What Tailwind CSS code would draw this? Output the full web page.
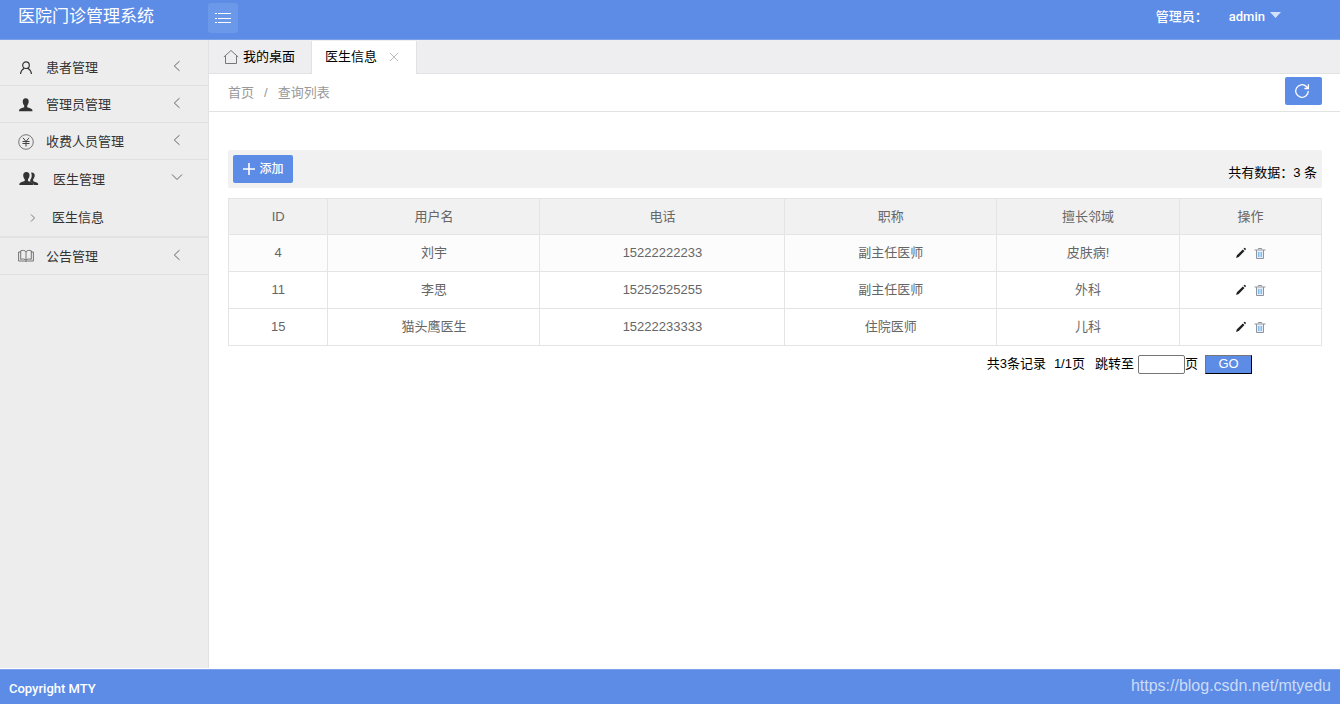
<!DOCTYPE html>
<html lang="zh-CN">
<head>
<meta charset="utf-8">
<title>医院门诊管理系统</title>
<script src="https://cdn.jsdelivr.net/npm/@tailwindcss/browser@4"></script>
</head>
<body class="flex min-h-screen flex-col bg-white font-['Liberation_Sans','Noto_Sans_CJK_SC',sans-serif] text-[13px] leading-5 text-black">
<svg class="hidden">
  <symbol id="left" viewBox="0 0 12 12"><path d="M8.500 1.200 3.300 6l5.200 4.800" fill="none" stroke="#666"/></symbol>
  <symbol id="pencil" viewBox="0 0 12 12"><path d="M1 11l.9-2.700 5.900-5.900 1.700 1.700L3.700 10zM8.500 1.700l.8-.8q.6-.3 1.200.3t.3 1.200l-.7.900z" fill="#222"/></symbol>
  <symbol id="trash" viewBox="0 0 12 12"><path d="M3 4h6v7H3z" fill="#e3f0fb"/><path d="M.5 3h11M4.300 2.500v-1h3.400v1M2.500 3v8.500h7V3" fill="none" stroke="#8f949c"/><path d="M4.500 5v5M6 5v5M7.500 5v5" stroke="#6aaee6" stroke-width=".8" fill="none"/></symbol>
</svg>

<header class="flex h-10 shrink-0 items-start border-b border-[#7ba1ea] bg-[#5c8ce6] text-white">
  <h1 class="w-[208px] pl-[18px] text-[17px] leading-[34px]">医院门诊管理系统</h1>
  <button type="button" aria-label="菜单" class="mt-[3px] flex size-[30px] items-center justify-center rounded-[3px] bg-white/10">
    <svg class="size-4" viewBox="0 0 16 16" fill="none" stroke="#fff"><path d="M0 3.500h2M3 3.500h13M0 8.500h2M3 8.500h13M0 12.500h2M3 12.500h13"/></svg>
  </button>
  <div class="mr-[59px] ml-auto flex h-[34px] items-center font-medium">
    <span class="mr-[21px]">管理员：</span>
    <a href="#" class="flex items-center gap-[5px] font-[Roboto]">admin
      <svg class="mb-1 h-[6px] w-[11px]" viewBox="0 0 11 6"><path d="M0 0h11L5.500 6z" fill="#d5e1f9"/></svg></a>
  </div>
</header>

<div class="flex flex-1">
  <nav class="mb-px w-[209px] shrink-0 border-r border-[#e2e2e4] bg-[#ededed] pt-[9px] text-[#333]">
    <a href="#" class="flex h-[37px] items-center border-b border-[#e0e0e0] pt-[2px] pr-[25px] pl-[18px]">
      <svg class="mr-3 mb-px size-4" viewBox="0 0 16 16" fill="none" stroke="#333" stroke-width="1.200"><circle cx="8" cy="5.200" r="3.300"/><path d="M6.300 8.300C4 9.500 2.800 11.500 2.500 14M9.700 8.300c2.300 1.200 3.500 3.200 3.800 5.700"/></svg>
      患者管理<svg class="mb-1 ml-auto size-3"><use href="#left"/></svg></a>
    <a href="#" class="flex h-[37px] items-center border-b border-[#e0e0e0] pt-[2px] pr-[25px] pl-[18px]">
      <svg class="mr-3 mb-px size-4" viewBox="0 0 16 16" fill="#333"><path d="M7.700 1.200c2.200 0 3.100 1.500 3 3.400-.1 1.900-.8 3.200-1.500 4v1.600c1.700.9 4.600 1 5.100 2.600l.2 1.400H1l.2-1.400c.5-1.600 3.300-1.700 5-2.600V8.600c-.8-.8-1.400-2.100-1.500-4 0-1.900.9-3.400 3-3.400z"/></svg>
      管理员管理<svg class="mb-1 ml-auto size-3"><use href="#left"/></svg></a>
    <a href="#" class="flex h-[37px] items-center border-b border-[#e0e0e0] pt-[2px] pr-[25px] pl-[18px]">
      <svg class="mr-3 mb-px size-4" viewBox="0 0 16 16" fill="none" stroke="#444"><circle cx="8" cy="8" r="7.300" stroke-width=".7"/><path d="M5 3.800 8 7.500l3-3.700M8 7.500v5M4.500 7.500h7M4.500 9.500h7"/></svg>
      收费人员管理<svg class="mb-1 ml-auto size-3"><use href="#left"/></svg></a>
    <div class="border-b-2 border-[#e2e2e2]">
      <a href="#" class="flex h-[38px] items-center pt-px pr-[25px] pl-[19px]">
        <svg class="mr-[14px] mb-px h-4 w-5" viewBox="0 0 20 16" fill="#333"><path d="M12.500 1.500c2.200-.2 3.300 1.200 3.200 3-.1 1.700-.8 2.900-1.500 3.700v2c1.600.8 4.300 1 4.800 2.400l.2 1.400h-4.300c-.3-1.900-2.200-2.500-3.700-3.200V8.900c.9-1.200 1.500-2.600 1.500-4.200 0-1.300-.2-2.400-.7-3z"/><path d="M7.400.9c2.200 0 3.200 1.500 3.100 3.400-.1 1.900-.8 3.200-1.500 4V10c1.700.9 4.700 1 5.200 2.600l.2 1.400H.3l.2-1.400c.5-1.600 3.500-1.700 5.200-2.600V8.300c-.8-.8-1.400-2.100-1.500-4 0-1.900 1-3.400 3.200-3.400z"/></svg>
        医生管理<svg class="mb-[5px] ml-auto size-3" viewBox="0 0 12 12"><path d="M1 3.500l5 5 5-5" fill="none" stroke="#666"/></svg></a>
      <a href="#" class="flex h-[38px] items-center pt-px pl-7">
        <svg class="mr-[14px] size-[10px]" viewBox="0 0 10 10"><path d="M3 1.500 6.500 5 3 8.500" fill="none" stroke="#777"/></svg>医生信息</a>
    </div>
    <a href="#" class="flex h-[37px] items-center border-b border-[#e0e0e0] pt-px pr-[25px] pl-[18px]">
      <svg class="mr-3 mb-px size-4" viewBox="0 0 16 16" fill="none" stroke="#555" stroke-width=".8"><path d="M8 3.800v8.700M8 3.800C7 2.300 4.500 2 2.700 2.800v8.500c2-.6 4.300-.3 5.300 1 1-1.300 3.300-1.600 5.300-1V2.800C11.500 2 9 2.300 8 3.800M2.700 4H.6v9h6q1.400 1 2.800 0h6V4h-2.100"/></svg>
      公告管理<svg class="mb-1 ml-auto size-3"><use href="#left"/></svg></a>
  </nav>

  <main class="min-w-0 flex-1">
    <div class="flex h-[34px] border-b border-[#e2e2e4] bg-[#eeeef0] pt-px">
      <a href="#" class="flex items-center border-r border-[#e2e2e4] pr-4 pl-[14px]">
        <svg class="mr-1 mb-px size-4" viewBox="0 0 16 16" fill="none" stroke="#777"><path d="M.8 8 8 1.500 15.200 8M2.500 7v7.500h11V7"/></svg>我的桌面</a>
      <div class="-mb-px flex items-center border-r border-[#e2e2e4] bg-white pr-[17px] pb-[2px] pl-[13px]">医生信息
        <button type="button" aria-label="关闭" class="ml-3"><svg class="size-[10px]" viewBox="0 0 10 10"><path d="M1 1l8 8M9 1 1 9" stroke="#bbb"/></svg></button></div>
    </div>
    <div class="flex h-[38px] items-center justify-between border-b border-[#e2e2e2] pr-[18px] pl-[19px] text-[#999]">
      <div class="flex gap-[10px]"><a href="#">首页</a><span>/</span><a href="#">查询列表</a></div>
      <button type="button" aria-label="刷新" class="mb-1 flex h-7 w-[37px] items-center rounded-[2px] bg-[#5c8ce6] pl-[9px]">
        <svg class="size-4" viewBox="0 0 16 16" fill="none" stroke="#fff" stroke-width="1.300"><path d="M14.300 8A6.300 6.300 0 1 1 12.300 3.400L14 5M14.400 1.300v4.200h-4"/></svg></button>
    </div>
    <div class="pt-[38px] pr-[18px] pl-[19px]">
      <div class="flex h-[38px] items-start justify-between rounded-[2px] bg-[#f1f1f1] p-[5px]">
        <button type="button" class="flex h-7 w-[60px] items-center justify-center gap-1 rounded-[2px] bg-[#5c8ce6] pl-px text-[12px] font-medium text-white">
          <svg class="size-3" viewBox="0 0 12 12"><path d="M6 0v12M0 6h12" stroke="#fff" stroke-width="1.600"/></svg>添加</button>
        <span class="pt-2">共有数据：3 条</span>
      </div>
      <table class="mt-[10px] w-full table-fixed border-collapse text-center text-[#666] [&_td]:border [&_td]:border-[#e4e4e4] [&_th]:border [&_th]:border-[#e4e4e4] [&_th]:font-normal">
        <colgroup><col class="w-[9.100%]"><col class="w-[19.400%]"><col class="w-[22.400%]"><col class="w-[19.400%]"><col class="w-[16.700%]"><col></colgroup>
        <thead><tr class="h-[36px] bg-[#f1f1f1]"><th>ID</th><th>用户名</th><th>电话</th><th>职称</th><th>擅长邻域</th><th>操作</th></tr></thead>
        <tbody>
          <tr class="h-[37px] bg-[#fcfcfc]"><td>4</td><td>刘宇</td><td>15222222233</td><td>副主任医师</td><td>皮肤病!</td><td><div class="flex justify-center gap-[7px] pb-px"><a href="#" aria-label="编辑"><svg class="size-3"><use href="#pencil"/></svg></a><a href="#" aria-label="删除"><svg class="size-3"><use href="#trash"/></svg></a></div></td></tr>
          <tr class="h-[37px]"><td>11</td><td>李思</td><td>15252525255</td><td>副主任医师</td><td>外科</td><td><div class="flex justify-center gap-[7px] pb-px"><a href="#" aria-label="编辑"><svg class="size-3"><use href="#pencil"/></svg></a><a href="#" aria-label="删除"><svg class="size-3"><use href="#trash"/></svg></a></div></td></tr>
          <tr class="h-[37px]"><td>15</td><td>猫头鹰医生</td><td>15222233333</td><td>住院医师</td><td>儿科</td><td><div class="flex justify-center gap-[7px] pb-px"><a href="#" aria-label="编辑"><svg class="size-3"><use href="#pencil"/></svg></a><a href="#" aria-label="删除"><svg class="size-3"><use href="#trash"/></svg></a></div></td></tr>
        </tbody>
      </table>
      <form class="mt-2 mr-[70px] flex items-center justify-end">
        <span class="mr-2">共3条记录</span><span class="mr-[10px]">1/1页</span>
        <label for="page" class="mr-1">跳转至</label>
        <input id="page" type="text" class="h-[19px] w-[47px] rounded-[2px] border border-[#767676] bg-white px-1">
        <span class="mr-[7px]">页</span>
        <button type="button" class="h-[19px] w-[47px] border border-t-[#767676] border-r-black border-b-black border-l-[#767676] bg-[#5c8ce6] leading-4 text-white">GO</button>
      </form>
    </div>
  </main>
</div>

<footer class="flex h-[35px] shrink-0 items-center justify-between border-t border-[#7ba1ea] bg-[#5c8ce6] px-[9px] text-white">
  <span class="pt-1 font-[Roboto] font-medium">Copyright MTY</span>
  <a href="https://blog.csdn.net/mtyedu" class="pb-[3px] text-[16px] text-white/70">https://blog.csdn.net/mtyedu</a>
</footer>
</body>
</html>
